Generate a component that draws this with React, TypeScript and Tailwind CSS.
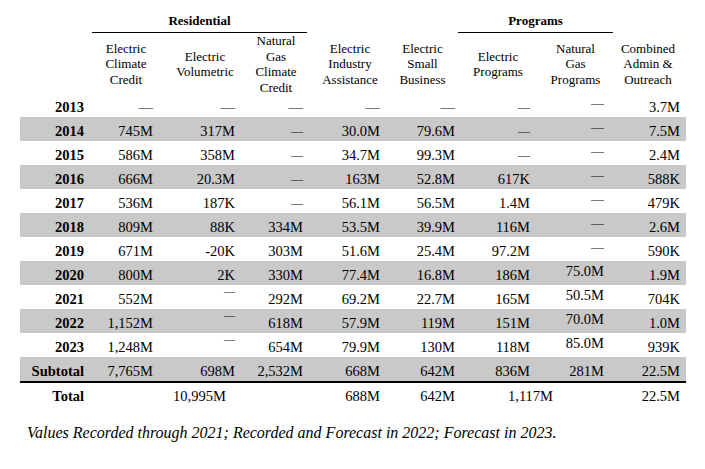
import React from "react";

const COLS = "grid grid-cols-[72px_68px_90px_57px_86px_65px_80px_75px_73px]";
const PR = ["pr-[8px]", "pr-[7px]", "pr-[15px]", "pr-[4px]", "pr-[13px]", "pr-[3px]", "pr-[8px]", "pr-[9px]", "pr-[6px]"];

type Cell = string | { t: string; k: "dash" | "sdash" | "rdash" | "hdash" | "raise" };

const D: Cell = { t: "—", k: "dash" };
const S: Cell = { t: "—", k: "sdash" };
const R: Cell = { t: "—", k: "rdash" };
const H: Cell = { t: "—", k: "hdash" };
const up = (t: string): Cell => ({ t, k: "raise" });

const rows: { year: string; cells: Cell[] }[] = [
  { year: "2013", cells: [D, D, D, D, D, S, R, "3.7M"] },
  { year: "2014", cells: ["745M", "317M", S, "30.0M", "79.6M", S, R, "7.5M"] },
  { year: "2015", cells: ["586M", "358M", S, "34.7M", "99.3M", S, R, "2.4M"] },
  { year: "2016", cells: ["666M", "20.3M", S, "163M", "52.8M", "617K", R, "588K"] },
  { year: "2017", cells: ["536M", "187K", S, "56.1M", "56.5M", "1.4M", R, "479K"] },
  { year: "2018", cells: ["809M", "88K", "334M", "53.5M", "39.9M", "116M", R, "2.6M"] },
  { year: "2019", cells: ["671M", "-20K", "303M", "51.6M", "25.4M", "97.2M", R, "590K"] },
  { year: "2020", cells: ["800M", "2K", "330M", "77.4M", "16.8M", "186M", up("75.0M"), "1.9M"] },
  { year: "2021", cells: ["552M", H, "292M", "69.2M", "22.7M", "165M", up("50.5M"), "704K"] },
  { year: "2022", cells: ["1,152M", H, "618M", "57.9M", "119M", "151M", up("70.0M"), "1.0M"] },
  { year: "2023", cells: ["1,248M", H, "654M", "79.9M", "130M", "118M", up("85.0M"), "939K"] },
];

function renderCell(c: Cell, i: number) {
  const pr = PR[i + 1];
  if (typeof c === "string") {
    return (
      <div key={i} className={`text-right ${pr} pt-[2px] leading-[24px]`}>
        {c}
      </div>
    );
  }
  if (c.k === "raise") {
    return (
      <div key={i} className={`text-right ${pr} pt-[2px] leading-[16px]`}>
        {c.t}
      </div>
    );
  }
  if (c.k === "dash") {
    return (
      <div key={i} className={`text-right ${pr} pt-[2px] leading-[24px]`}>
        {c.t}
      </div>
    );
  }
  if (c.k === "sdash") {
    return (
      <div key={i} className={`text-right ${pr} pt-[2px] leading-[24px] text-[12px]`}>
        {c.t}
      </div>
    );
  }
  if (c.k === "rdash") {
    return (
      <div key={i} className={`text-right ${pr} pt-[2px] leading-[16px] text-[13px]`}>
        {c.t}
      </div>
    );
  }
  return (
    <div key={i} className={`text-right ${pr} pt-0 leading-[12px] text-[11px]`}>
      {c.t}
    </div>
  );
}

export default function App() {
  return (
    <div className="w-[705px] h-[469px] bg-white text-black font-['Liberation_Serif',serif] overflow-hidden">
      <div className="ml-[20px] w-[666px]">
        {/* group header */}
        <div className={`${COLS} h-[33px]`}>
          <div />
          <div className="col-span-3 border-b border-black flex items-end justify-center pb-[3px] text-[13px] font-bold leading-[16px]">
            Residential
          </div>
          <div />
          <div />
          <div className="col-span-2 border-b border-black flex items-end justify-center pb-[3px] text-[13px] font-bold leading-[16px]">
            Programs
          </div>
          <div />
        </div>
        {/* column headers */}
        <div className={`${COLS} h-[60px] text-[13px] leading-[15.5px]`}>
          <div />
          <div className="flex items-center justify-center text-center">Electric<br />Climate<br />Credit</div>
          <div className="flex items-center justify-center text-center">Electric<br />Volumetric</div>
          <div className="flex items-center justify-center text-center pr-[5px]">Natural<br />Gas<br />Climate<br />Credit</div>
          <div className="flex items-center justify-center text-center">Electric<br />Industry<br />Assistance</div>
          <div className="flex items-center justify-center text-center pr-[6px]">Electric<br />Small<br />Business</div>
          <div className="flex items-center justify-center text-center">Electric<br />Programs</div>
          <div className="flex items-center justify-center text-center">Natural<br />Gas<br />Programs</div>
          <div className="flex items-center justify-center text-center pr-[3px]">Combined<br />Admin &amp;<br />Outreach</div>
        </div>
        {/* data rows */}
        {rows.map((r, ri) => (
          <div
            key={r.year}
            className={`${COLS} h-[24px] text-[14.5px] ${ri % 2 === 1 ? "bg-[#c9c9c9]" : "bg-white"}`}
          >
            <div className={`text-right ${PR[0]} pt-[2px] leading-[24px] font-bold`}>{r.year}</div>
            {r.cells.map((c, i) => renderCell(c, i))}
          </div>
        ))}
        {/* subtotal */}
        <div className={`${COLS} h-[26px] text-[14.5px] bg-[#c9c9c9] border-b-2 border-black`}>
          <div className={`text-right ${PR[0]} pt-[2px] leading-[24px] font-bold`}>Subtotal</div>
          {["7,765M", "698M", "2,532M", "668M", "642M", "836M", "281M", "22.5M"].map((v, i) => renderCell(v, i))}
        </div>
        {/* total */}
        <div className={`${COLS} h-[24px] text-[14.5px]`}>
          <div className={`text-right ${PR[0]} pt-[1px] leading-[24px] font-bold`}>Total</div>
          <div className="col-span-3 text-center pt-[1px] leading-[24px]">10,995M</div>
          <div className={`text-right ${PR[4]} pt-[1px] leading-[24px]`}>688M</div>
          <div className={`text-right ${PR[5]} pt-[1px] leading-[24px]`}>642M</div>
          <div className="col-span-2 text-center pr-[10px] pt-[1px] leading-[24px]">1,117M</div>
          <div className={`text-right ${PR[8]} pt-[1px] leading-[24px]`}>22.5M</div>
        </div>
      </div>
      <p className="ml-[27px] mt-[16px] text-[16px] italic leading-[20px]">
        Values Recorded through 2021; Recorded and Forecast in 2022; Forecast in 2023.
      </p>
    </div>
  );
}
